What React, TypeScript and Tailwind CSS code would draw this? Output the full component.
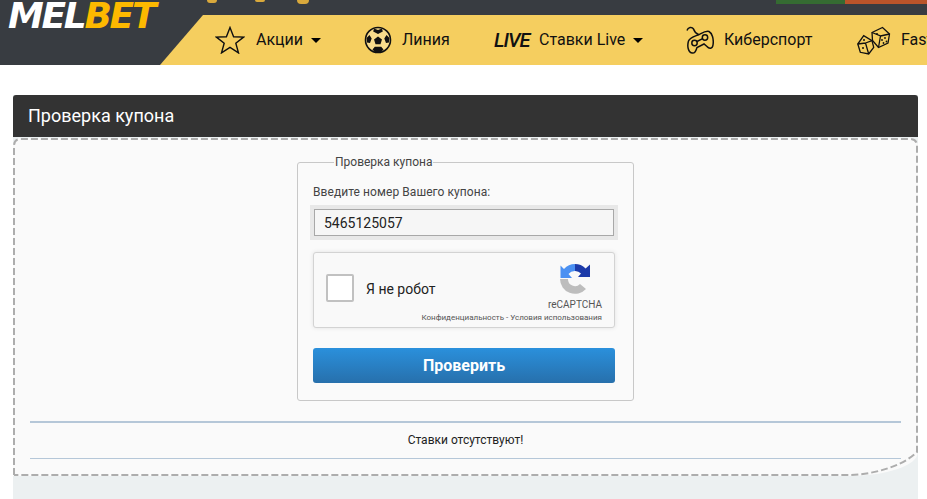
const NavCaret = () => (
  <span className="ml-2 h-0 w-0 border-x-[5px] border-t-[5px] border-x-transparent border-t-black" />
);

const StarIcon = () => (
  <svg width="30" height="28" viewBox="0 0 30 28" fill="none" stroke="#111" strokeWidth="1.4">
    <path d="M15 1.5l3.6 9.2 10 .4-7.8 6.2 2.7 9.6L15 21.4l-8.5 5.5 2.7-9.6-7.8-6.2 10-.4z" />
  </svg>
);

const BallIcon = () => (
  <svg width="28" height="28" viewBox="0 0 28 28">
    <circle cx="14" cy="14" r="12.500" fill="#f8dc8c" stroke="#111" strokeWidth="1.6" />
    <path d="M14 10.500l4 3-1.500 4.700h-5l-1.500-4.700z" fill="#111" />
    <path d="M10 2.500l4 1.500 4-1.500.8 3L14 8 9.200 5.500zM2.500 12l3-3 2.200 3.500-1.700 4.500-3-.6zM25.500 12l-3-3-2.200 3.500 1.700 4.500 3-.6zM8.500 23.500l2.300-2.700h6.400l2.300 2.700-2.500 2.500h-6z" fill="#111" />
  </svg>
);

const GamepadIcon = () => (
  <svg width="28" height="28" viewBox="0 0 28 28" fill="none" stroke="#111" strokeWidth="1.5">
    <path d="M1 4.500C2 1 6 .5 7.500 3c1 3 2.500 4.500 5 5.500" />
    <path d="M2.500 15C4 11 10 10 13 8.500S20 4.500 23 5.500C26 7 28 13 27 19c-.5 4-4 4-6 1.500L18 18l-7 3.500C10 24 9.500 27.500 6.500 27 2 26.500 1 20 2.500 15z" />
    <circle cx="8.500" cy="17" r="2.700" />
    <circle cx="19" cy="11.500" r="2.700" />
    <path d="M11 15.500l5.600-2.800" />
  </svg>
);

const DiceIcon = () => (
  <svg width="34" height="30" viewBox="0 0 34 30" fill="none" stroke="#111" strokeWidth="1.3">
    <path d="M15 7.500l10.500-5 7 6.500L31 18l-9.500 4.500-6-7z" />
    <path d="M15 7.500l8.500 3.500-2 11.500M23.500 11l9-2" />
    <path d="M.8 19l5.900-8.300 8.300 5 1.700 6.600-5 6.700-8.400-1.700z" />
    <path d="M.8 19l7.700-1 3.200 11M8.500 18l6.500-2.300" />
    <g fill="#111" stroke="none">
      <circle cx="20" cy="9" r="1" />
      <circle cx="25" cy="15" r=".9" />
      <circle cx="28" cy="13" r=".9" />
      <circle cx="26.500" cy="18" r=".9" />
      <circle cx="29.500" cy="16.500" r=".9" />
      <circle cx="7" cy="15" r="1" />
      <circle cx="6" cy="23" r="1" />
    </g>
  </svg>
);

const RecaptchaIcon = () => (
  <svg width="32" height="32" viewBox="0 0 32 32">
    <path d="M1 16h8a7 7 0 0 0 12 5l6 5A15 15 0 0 1 1 16z" fill="#bdbdbd" />
    <path d="M16 1A15 15 0 0 0 5 6L1.500 2.500V15H13l-3.500-4A8 8 0 0 1 16 8z" fill="#4a90f2" />
    <path d="M16 1a15 15 0 0 1 10.600 4.400L31 1.500V14H19l3-3.500A8 8 0 0 0 16 8z" fill="#1c3aa9" />
  </svg>
);

export default function App() {
  return (
    <div className="h-[499px] w-[927px] overflow-hidden bg-white font-['Roboto',sans-serif]">
      {/* header */}
      <header className="relative h-[65px] bg-[#383c41]">
        <div className="absolute left-[207px] top-0 h-[3px] w-[10px] rounded-b bg-[#d9a93c]" />
        <div className="absolute left-[255px] top-0 h-[2px] w-[10px] rounded-b bg-[#d9a93c]" />
        <div className="absolute left-[297px] top-0 h-[4px] w-[12px] rounded-b-md bg-[#d9a93c]" />
        <div className="absolute left-[776px] top-0 h-[4px] w-[69px] bg-[#356b32]" />
        <div className="absolute left-[845px] top-0 h-[4px] w-[82px] bg-[#b9542a]" />

        <div className="absolute left-[8px] top-[2px] font-['DejaVu_Sans',sans-serif] text-[36px] font-bold italic leading-[28px] tracking-[-2.3px]">
          <span className="text-white">MEL</span>
          <span className="text-[#fdb900]">BET</span>
        </div>

        <nav className="absolute bottom-0 left-[160px] right-0 flex h-[50px] items-center overflow-hidden bg-[#f5ce5f] pl-[55px] text-[16px] text-[#111] [clip-path:polygon(43px_0,100%_0,100%_100%,0_100%)]">
          <div className="flex w-[149px] shrink-0 items-center">
            <StarIcon />
            <span className="ml-[11px]">Акции</span>
            <NavCaret />
          </div>
          <div className="flex w-[130px] shrink-0 items-center">
            <BallIcon />
            <span className="ml-[10px]">Линия</span>
          </div>
          <div className="flex w-[192px] shrink-0 items-center">
            <span className="inline-block w-[34px] text-[20px] font-medium italic tracking-[-1px]">LIVE</span>
            <span className="ml-[11px]">Ставки Live</span>
            <NavCaret />
          </div>
          <div className="flex w-[171px] shrink-0 items-center">
            <GamepadIcon />
            <span className="ml-[10px]">Киберспорт</span>
          </div>
          <div className="flex shrink-0 items-center">
            <DiceIcon />
            <span className="ml-[10px]">Fast</span>
          </div>
        </nav>
      </header>

      {/* panel */}
      <main className="ml-[13px] mt-[30px] w-[905px] bg-[#ecf0f1] pb-[23px]">
        <h1 className="flex h-[42px] items-center rounded-t-[3px] bg-[#333333] pb-[2px] pl-[15px] text-[18px] font-normal text-white">
          Проверка купона
        </h1>
        <div className="relative mt-px flex h-[338px] flex-col items-center rounded-tl-[8px] rounded-tr-[8px] rounded-br-[70px_24px] border-2 border-transparent bg-[#fafafa] px-[15px] pt-[15px]">
          {/* dashed outline, the dash length and the odd corner can't be had from a css border */}
          <svg className="pointer-events-none absolute left-[-2px] top-[-2px]" width="905" height="338" fill="none" stroke="#adadad" strokeWidth="2" strokeDasharray="7 3">
            <path d="M1 337V8Q1 1 8 1H897Q904 1 904 8V314C890 328 860 337 834 337H1" />
          </svg>
          <fieldset className="h-[246px] w-[337px] rounded-[3px] border border-[#c8c8c8] px-[15px] pb-0">
            <legend className="ml-[21px] px-[1px] text-[12px] leading-[14px] text-[#444]">Проверка купона</legend>
            <p className="mt-[16px] text-[12px] leading-[14px] tracking-[0.07px] text-[#444]">Введите номер Вашего купона:</p>
            <div className="ml-[-3px] mt-[6px] border-4 border-[#e8e8e8]">
              <div className="flex h-[27px] items-center border border-[#a8a8a8] bg-[#f6f6f6] pl-[9px] pt-px text-[14px] text-[#222]">
                5465125057
              </div>
            </div>
            <div className="relative mt-[12px] h-[76px] w-[302px] rounded-[3px] border border-[#d3d3d3] bg-[#f9f9f9] shadow-[0_0_4px_rgba(0,0,0,0.1)]">
              <div className="absolute left-[12px] top-[21px] h-[28px] w-[28px] rounded-[2px] border-2 border-[#c1c1c1] bg-white" />
              <span className="absolute left-[52px] top-[28px] text-[14px] leading-[16px] text-[#222]">Я не робот</span>
              <div className="absolute left-[245px] top-[10px]">
                <RecaptchaIcon />
              </div>
              <span className="absolute right-[12px] top-[46px] text-[10px] leading-[12px] text-[#555]">reCAPTCHA</span>
              <span className="absolute right-[12px] top-[60px] whitespace-nowrap text-[8px] leading-[10px] text-[#555]">
                Конфиденциальность - Условия использования
              </span>
            </div>
            <button className="mt-[20px] h-[35px] w-[302px] rounded-[3px] bg-gradient-to-b from-[#2a90dc] to-[#2770ac] text-[16px] font-bold text-white">
              Проверить
            </button>
          </fieldset>
          <div className="mt-[20px] w-full border-t-2 border-b border-t-[#b5c7d8] border-b-[#b5c7d8] pb-[11px] pt-[10px] text-center text-[12px] leading-[14px] text-[#222]">
            Ставки отсутствуют!
          </div>
        </div>
      </main>
    </div>
  );
}
